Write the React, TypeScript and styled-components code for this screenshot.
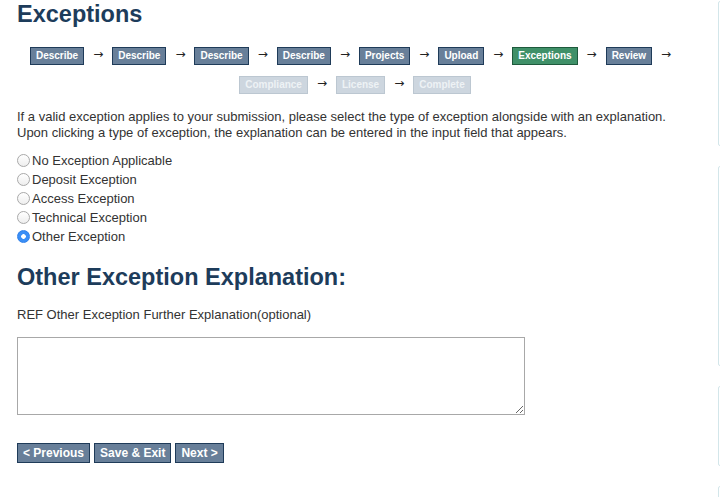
import React from "react";
import styled, { createGlobalStyle, css } from "styled-components";

const GlobalStyle = createGlobalStyle`
  html, body { margin: 0; padding: 0; background: #fff; overflow: hidden; }
  body { font-family: "Liberation Sans", Arial, Helvetica, sans-serif; color: #333; }
`;

const Page = styled.div`
  display: flex;
  width: 100%;
  height: 497px;
  overflow: hidden;
`;

const Main = styled.main`
  flex: 0 0 718px;
  box-sizing: border-box;
  padding: 1px 25px 0 17px;
`;

const Title = styled.h1`
  margin: 0;
  font-size: 23.5px;
  line-height: 27px;
  font-weight: bold;
  color: #1d3c5b;
`;

const Steps = styled.nav`
  display: flex;
  flex-wrap: wrap;
  justify-content: center;
  row-gap: 10px;
  margin-top: 18px;
`;

const StepItem = styled.div`
  display: flex;
  align-items: center;
`;

type StepState = "done" | "current" | "todo";

const StepBox = styled.span<{ $state: StepState }>`
  display: inline-block;
  height: 16px;
  line-height: 16px;
  padding: 0 5px;
  border: 1px solid;
  font-size: 10px;
  font-weight: bold;
  white-space: nowrap;
  ${(p) =>
    p.$state === "done" &&
    css`
      background: #687f99;
      border-color: #1f3b59;
      color: #fff;
    `}
  ${(p) =>
    p.$state === "current" &&
    css`
      background: #3f9068;
      border-color: #1e5a3c;
      color: #fff;
    `}
  ${(p) =>
    p.$state === "todo" &&
    css`
      background: #cdd6df;
      border-color: #bcc7d1;
      color: #eef2f5;
    `}
`;

const Arrow = styled.span`
  width: 12px;
  margin: 0 8px;
  padding-bottom: 3px;
  font-family: "DejaVu Sans", sans-serif;
  font-size: 12px;
  line-height: 16px;
  text-align: center;
  color: #222;
  overflow: hidden;
`;

const Intro = styled.p`
  margin: 15px 0 0;
  font-size: 13px;
  line-height: 15.5px;
  color: #333;
`;

const RadioList = styled.div`
  margin-top: 11px;
  display: flex;
  flex-direction: column;
`;

const RadioRow = styled.label`
  display: flex;
  align-items: center;
  gap: 2px;
  height: 19px;
  font-size: 13px;
  color: #333;
`;

const RadioInput = styled.input.attrs({ type: "radio" })`
  appearance: none;
  -webkit-appearance: none;
  margin: 0;
  width: 13px;
  height: 13px;
  flex: none;
  box-sizing: border-box;
  border-radius: 50%;
  border: 1px solid #a9a9a9;
  background: linear-gradient(#ffffff, #eeeeee);
  &:checked {
    border-color: #2f80ea;
    background: radial-gradient(circle, #fff 0 2px, #3a8ef6 2.6px);
  }
`;

const SubTitle = styled.h2`
  margin: 18px 0 0;
  font-size: 23.5px;
  line-height: 27px;
  font-weight: bold;
  color: #1d3c5b;
`;

const FieldLabel = styled.label`
  display: block;
  margin-top: 16px;
  font-size: 13px;
  line-height: 15px;
  color: #333;
`;

const TextArea = styled.textarea`
  display: block;
  margin-top: 15px;
  box-sizing: border-box;
  width: 508px;
  height: 78px;
  border: 1px solid #a8a8a8;
  border-radius: 0;
  padding: 2px;
  font-family: inherit;
  font-size: 13px;
  outline: none;
`;

const Actions = styled.div`
  display: flex;
  gap: 4px;
  margin-top: 28px;
`;

const ActionButton = styled.button`
  height: 20px;
  line-height: 18px;
  padding: 0 5px;
  margin: 0;
  border: 1px solid #1f3b59;
  border-radius: 0;
  background: #687f99;
  color: #fff;
  font-family: inherit;
  font-size: 12px;
  font-weight: bold;
  cursor: pointer;
`;

const Sidebar = styled.aside`
  flex: 0 0 240px;
  display: flex;
  flex-direction: column;
  gap: 20px;
  padding-top: 1px;
`;

const Card = styled.div<{ $h: number }>`
  height: ${(p) => p.$h}px;
  box-sizing: border-box;
  border: 1px solid #d3e6ea;
  border-radius: 2px;
  flex: none;
`;

const steps: { label: string; state: StepState }[] = [
  { label: "Describe", state: "done" },
  { label: "Describe", state: "done" },
  { label: "Describe", state: "done" },
  { label: "Describe", state: "done" },
  { label: "Projects", state: "done" },
  { label: "Upload", state: "done" },
  { label: "Exceptions", state: "current" },
  { label: "Review", state: "done" },
  { label: "Compliance", state: "todo" },
  { label: "License", state: "todo" },
  { label: "Complete", state: "todo" },
];

const options = [
  "No Exception Applicable",
  "Deposit Exception",
  "Access Exception",
  "Technical Exception",
  "Other Exception",
];

export default function App() {
  const [selected, setSelected] = React.useState("Other Exception");
  return (
    <>
      <GlobalStyle />
      <Page>
        <Main>
          <Title>Exceptions</Title>
          <Steps>
            {steps.map((s, i) => (
              <StepItem key={i}>
                <StepBox $state={s.state}>{s.label}</StepBox>
                {i < steps.length - 1 && <Arrow>→</Arrow>}
              </StepItem>
            ))}
          </Steps>
          <Intro>
            If a valid exception applies to your submission, please select the type of exception alongside with an explanation.
            <br />
            Upon clicking a type of exception, the explanation can be entered in the input field that appears.
          </Intro>
          <RadioList>
            {options.map((o) => (
              <RadioRow key={o}>
                <RadioInput
                  name="exception"
                  checked={selected === o}
                  onChange={() => setSelected(o)}
                />
                {o}
              </RadioRow>
            ))}
          </RadioList>
          <SubTitle>Other Exception Explanation:</SubTitle>
          <FieldLabel htmlFor="other-expl">REF Other Exception Further Explanation(optional)</FieldLabel>
          <TextArea id="other-expl" />
          <Actions>
            <ActionButton>&lt; Previous</ActionButton>
            <ActionButton>Save &amp; Exit</ActionButton>
            <ActionButton>Next &gt;</ActionButton>
          </Actions>
        </Main>
        <Sidebar>
          <Card $h={145} />
          <Card $h={200} />
          <Card $h={80} />
          <Card $h={100} />
        </Sidebar>
      </Page>
    </>
  );
}
